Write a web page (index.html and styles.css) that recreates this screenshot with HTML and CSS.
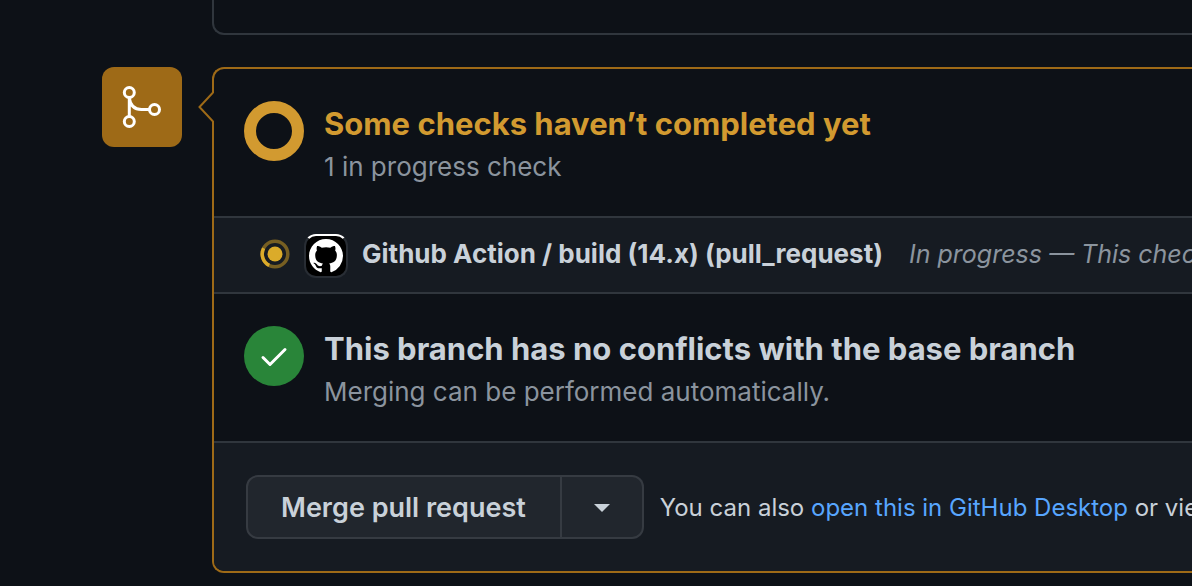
FILE: index.html
```
<!DOCTYPE html>
<html lang="en">
<head>
<meta charset="utf-8">
<meta name="viewport" content="width=device-width, initial-scale=1">
<title>Merge status</title>
<link rel="stylesheet" href="styles.css">
</head>
<body>
<main class="timeline">
  <div class="previous-card"></div>
  <div class="merge">
    <div class="merge-badge">
      <svg width="80" height="80" viewBox="0 0 80 80" fill="none" stroke="#fff" stroke-width="3" aria-hidden="true">
        <circle cx="27.3" cy="25.5" r="5"/>
        <circle cx="27.3" cy="54.5" r="5"/>
        <circle cx="52.5" cy="42.5" r="5"/>
        <path d="M27.3 30.5v19M27.3 31c1 7.500 5.500 11.500 12 11.500h8"/>
      </svg>
    </div>
    <div class="card">
      <svg class="card-pointer" width="16" height="30" viewBox="0 0 16 30" aria-hidden="true">
        <path d="M16 1v28H15L1 15 15 1z" fill="#0d1117"/>
        <path d="M15 0.500 1.500 15 15 29.500" fill="none" stroke="#9e6a17" stroke-width="2"/>
      </svg>
      <section class="status">
        <svg class="status-icon" width="60" height="60" viewBox="0 0 60 60" aria-hidden="true">
          <circle cx="30" cy="30" r="24" fill="none" stroke="#d29a30" stroke-width="12"/>
        </svg>
        <div class="status-text">
          <h2 class="status-title pending">Some checks haven’t completed yet</h2>
          <p class="status-note">1 in progress check</p>
        </div>
      </section>
      <section class="check">
        <svg class="check-spinner" width="30" height="30" viewBox="0 0 30 30" aria-hidden="true">
          <circle cx="15" cy="15" r="12.800" fill="none" stroke="#775f22" stroke-width="3.500"/>
          <path d="M9.200 26.400A12.800 12.800 0 0 1 3.600 9.200" fill="none" stroke="#dbab2a" stroke-width="3.500"/>
          <circle cx="15" cy="15" r="7.500" fill="#dbab2a"/>
        </svg>
        <span class="avatar">
          <svg width="34" height="34" viewBox="0 0 16 16" fill="#fff" role="img" aria-label="GitHub">
            <path d="M8 0C3.580 0 0 3.580 0 8c0 3.540 2.290 6.530 5.470 7.590.4.070.55-.17.55-.38 0-.19-.01-.82-.01-1.490-2.010.37-2.530-.49-2.690-.94-.09-.23-.48-.94-.82-1.130-.28-.15-.68-.52-.01-.53.63-.01 1.080.58 1.230.82.72 1.210 1.870.87 2.330.66.07-.52.28-.87.51-1.070-1.780-.2-3.640-.89-3.640-3.950 0-.87.31-1.590.82-2.150-.08-.2-.36-1.020.08-2.120 0 0 .67-.21 2.200.82.64-.18 1.320-.27 2-.27s1.360.09 2 .27c1.530-1.040 2.200-.82 2.200-.82.44 1.100.16 1.920.08 2.120.51.56.82 1.270.82 2.150 0 3.070-1.870 3.750-3.650 3.950.29.25.54.73.54 1.480 0 1.070-.01 1.930-.01 2.200 0 .21.15.46.55.38A8.010 8.010 0 0 0 16 8c0-4.420-3.580-8-8-8z"/>
          </svg>
        </span>
        <strong class="check-name">Github Action / build (14.x) (pull_request)</strong>
        <em class="check-state">In progress — This check has started...</em>
      </section>
      <section class="status">
        <svg class="status-icon" width="60" height="60" viewBox="0 0 60 60" aria-hidden="true">
          <circle cx="30" cy="30" r="30" fill="#298539"/>
          <path d="M19 31.500 26 38.500 41 23.500" fill="none" stroke="#fff" stroke-width="3" stroke-linecap="round" stroke-linejoin="round"/>
        </svg>
        <div class="status-text">
          <h2 class="status-title">This branch has no conflicts with the base branch</h2>
          <p class="status-note">Merging can be performed automatically.</p>
        </div>
      </section>
      <footer class="actions">
        <div class="button-group">
          <button class="button merge-button" type="button">Merge pull request</button>
          <button class="button menu-button" type="button" aria-label="Select merge method">
            <svg width="16" height="8" viewBox="0 0 16 8" aria-hidden="true"><path d="M0 0h16L8 8z" fill="#c9d1d9"/></svg>
          </button>
        </div>
        <p class="hint">You can also <a class="link" href="#">open this in GitHub Desktop</a> or view command line instructions.</p>
      </footer>
    </div>
  </div>
</main>
</body>
</html>
```

FILE: styles.css
```
* {
  box-sizing: border-box;
}

body {
  margin: 0;
  background: #0d1117;
  color: #c9d1d9;
  font-family: Inter, "Liberation Sans", sans-serif;
  font-size: 26px;
  line-height: 40px;
  overflow: hidden;
}

h2,
p {
  margin: 0;
}

.timeline {
  display: flex;
  flex-direction: column;
  gap: 32px;
  padding-left: 102px;
}

.previous-card {
  height: 35px;
  margin-left: 110px;
  border: 2px solid #30363d;
  border-width: 0 0 2px 2px;
  border-bottom-left-radius: 12px;
}

.merge {
  display: flex;
  align-items: flex-start;
  gap: 30px;
}

.merge-badge {
  display: flex;
  flex: none;
  border-radius: 12px;
  background: #9e6a17;
}

.card {
  position: relative;
  flex: 1;
  min-width: 0;
  border: 2px solid #9e6a17;
  border-right: 0;
  border-radius: 12px 0 0 12px;
}

.card-pointer {
  position: absolute;
  top: 23px;
  left: -16px;
}

.status {
  display: flex;
  gap: 20px;
  padding: 32px 30px 29px;
}

.status-icon {
  flex: none;
}

.status-text {
  min-width: 0;
  white-space: nowrap;
}

.status-title {
  font-size: 31px;
  font-weight: 650;
  line-height: 46px;
}

.pending {
  color: #d29a30;
}

.status-note {
  color: #8b949e;
}

.check {
  display: flex;
  align-items: center;
  height: 78px;
  padding: 0 0 3px 46px;
  border: 2px solid #30363d;
  border-width: 2px 0;
  background: #161b22;
  overflow: hidden;
  white-space: nowrap;
}

.check-spinner {
  flex: none;
}

.avatar {
  display: flex;
  flex: none;
  align-items: center;
  justify-content: center;
  width: 44px;
  height: 44px;
  margin: 4px 14px 0;
  border: 2px solid #282d34;
  border-top-color: #fff;
  border-radius: 12px;
  background: #000;
}

.check-name {
  font-weight: 700;
}

.check-state {
  margin-left: 26px;
  color: #8b949e;
  font-size: 25px;
}

.actions {
  display: flex;
  align-items: center;
  gap: 16px;
  padding: 32px;
  border-top: 2px solid #30363d;
  border-bottom-left-radius: 10px;
  background: #161b22;
  overflow: hidden;
  white-space: nowrap;
}

.button-group {
  display: flex;
  flex: none;
}

.button {
  height: 64px;
  border: 2px solid #363b42;
  background: #21262d;
  color: #c9d1d9;
  font: inherit;
}

.merge-button {
  padding: 2px 34px 0 33px;
  border-radius: 12px 0 0 12px;
  font-size: 27px;
  font-weight: 600;
}

.menu-button {
  display: flex;
  align-items: center;
  justify-content: center;
  width: 82px;
  padding: 2px 0 0;
  border-left: 0;
  border-radius: 0 12px 12px 0;
}

.hint {
  padding-top: 2px;
  font-size: 24px;
}

.link {
  color: #58a6ff;
  text-decoration: none;
}
```
